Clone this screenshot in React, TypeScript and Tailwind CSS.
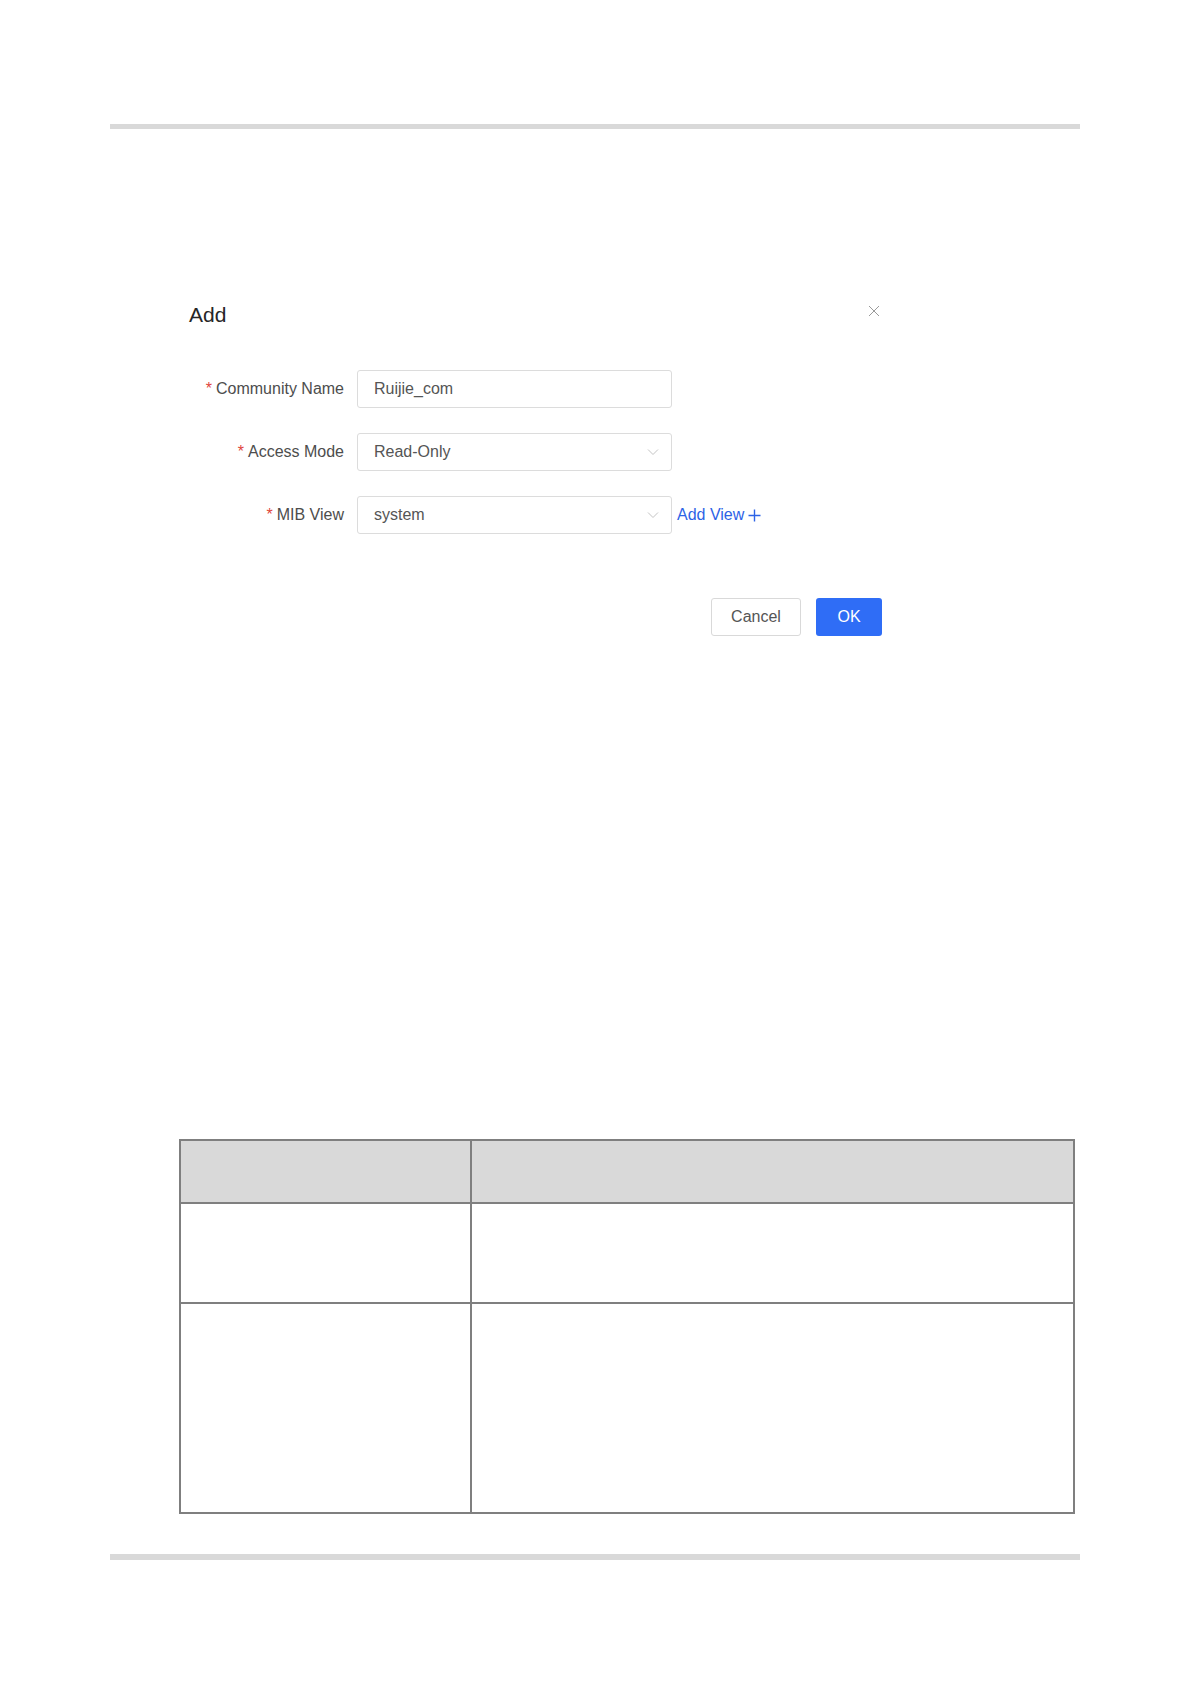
import React from "react";

const fontStack = "font-['Liberation_Sans','Noto_Sans',sans-serif]";

const Chevron = () => (
  <svg width="12" height="8" viewBox="0 0 12 8" fill="none" className="shrink-0">
    <polyline points="1,1.5 6,6.5 11,1.5" stroke="#c4c4c4" strokeWidth="1" />
  </svg>
);

interface FieldRowProps {
  label: string;
  value: string;
  select?: boolean;
  extra?: React.ReactNode;
}

const FieldRow: React.FC<FieldRowProps> = ({ label, value, select, extra }) => (
  <div className="flex items-center h-[38px]">
    <div className="w-[168px] text-right text-[16px] text-[#4d4d4d] pr-[13px]">
      <span className="text-[#e0463c] mr-[4px]">*</span>
      {label}
    </div>
    <div className="flex items-center justify-between w-[315px] h-[38px] rounded-[3px] border border-[#dcdcdc] bg-white pl-[16px] pr-[12px]">
      <span className="text-[16px] text-[#555555]">{value}</span>
      {select && <Chevron />}
    </div>
    {extra}
  </div>
);

export default function App() {
  return (
    <div className={`min-h-[1684px] bg-white pt-[124px] ${fontStack}`}>
      {/* top rule */}
      <div className="ml-[110px] w-[970px] h-[5px] bg-[#d9d9d9]" />

      {/* dialog */}
      <div className="ml-[189px] w-[693px] mt-[172px]">
        <div className="flex items-center justify-between h-[28px]">
          <h2 className="text-[21px] leading-[28px] text-[#262626]">Add</h2>
          <button className="mr-[2px] -mt-[8px]" aria-label="close">
            <svg width="12" height="12" viewBox="0 0 12 12">
              <path d="M1 1L11 11M11 1L1 11" stroke="#9a9a9a" strokeWidth="1" />
            </svg>
          </button>
        </div>

        <div className="flex flex-col gap-[25px] mt-[41px]">
          <FieldRow label="Community Name" value="Ruijie_com" />
          <FieldRow label="Access Mode" value="Read-Only" select />
          <FieldRow
            label="MIB View"
            value="system"
            select
            extra={
              <button className="flex items-center gap-[4px] ml-[5px] text-[16px] text-[#2d63e6]">
                Add View
                <svg width="13" height="13" viewBox="0 0 13 13">
                  <path d="M6.5 0.5V12.5M0.5 6.5H12.5" stroke="#2d63e6" strokeWidth="1.4" />
                </svg>
              </button>
            }
          />
        </div>

        <div className="flex justify-end gap-[15px] mt-[64px]">
          <button className="w-[90px] h-[38px] rounded-[3px] border border-[#d9d9d9] bg-white text-[16px] text-[#555555]">
            Cancel
          </button>
          <button className="w-[66px] h-[38px] rounded-[3px] bg-[#2f6df6] text-[16px] text-white">
            OK
          </button>
        </div>
      </div>

      {/* empty table */}
      <div className="ml-[179px] mt-[503px] w-[896px] border-2 border-[#7f7f7f]">
        <div className="flex h-[61px] bg-[#d9d9d9]">
          <div className="w-[289px]" />
          <div className="flex-1 border-l-2 border-[#7f7f7f]" />
        </div>
        <div className="flex h-[100px] border-t-2 border-[#7f7f7f]">
          <div className="w-[289px]" />
          <div className="flex-1 border-l-2 border-[#7f7f7f]" />
        </div>
        <div className="flex h-[210px] border-t-2 border-[#7f7f7f]">
          <div className="w-[289px]" />
          <div className="flex-1 border-l-2 border-[#7f7f7f]" />
        </div>
      </div>

      {/* bottom rule */}
      <div className="ml-[110px] mt-[40px] w-[970px] h-[6px] bg-[#d9d9d9]" />
    </div>
  );
}
